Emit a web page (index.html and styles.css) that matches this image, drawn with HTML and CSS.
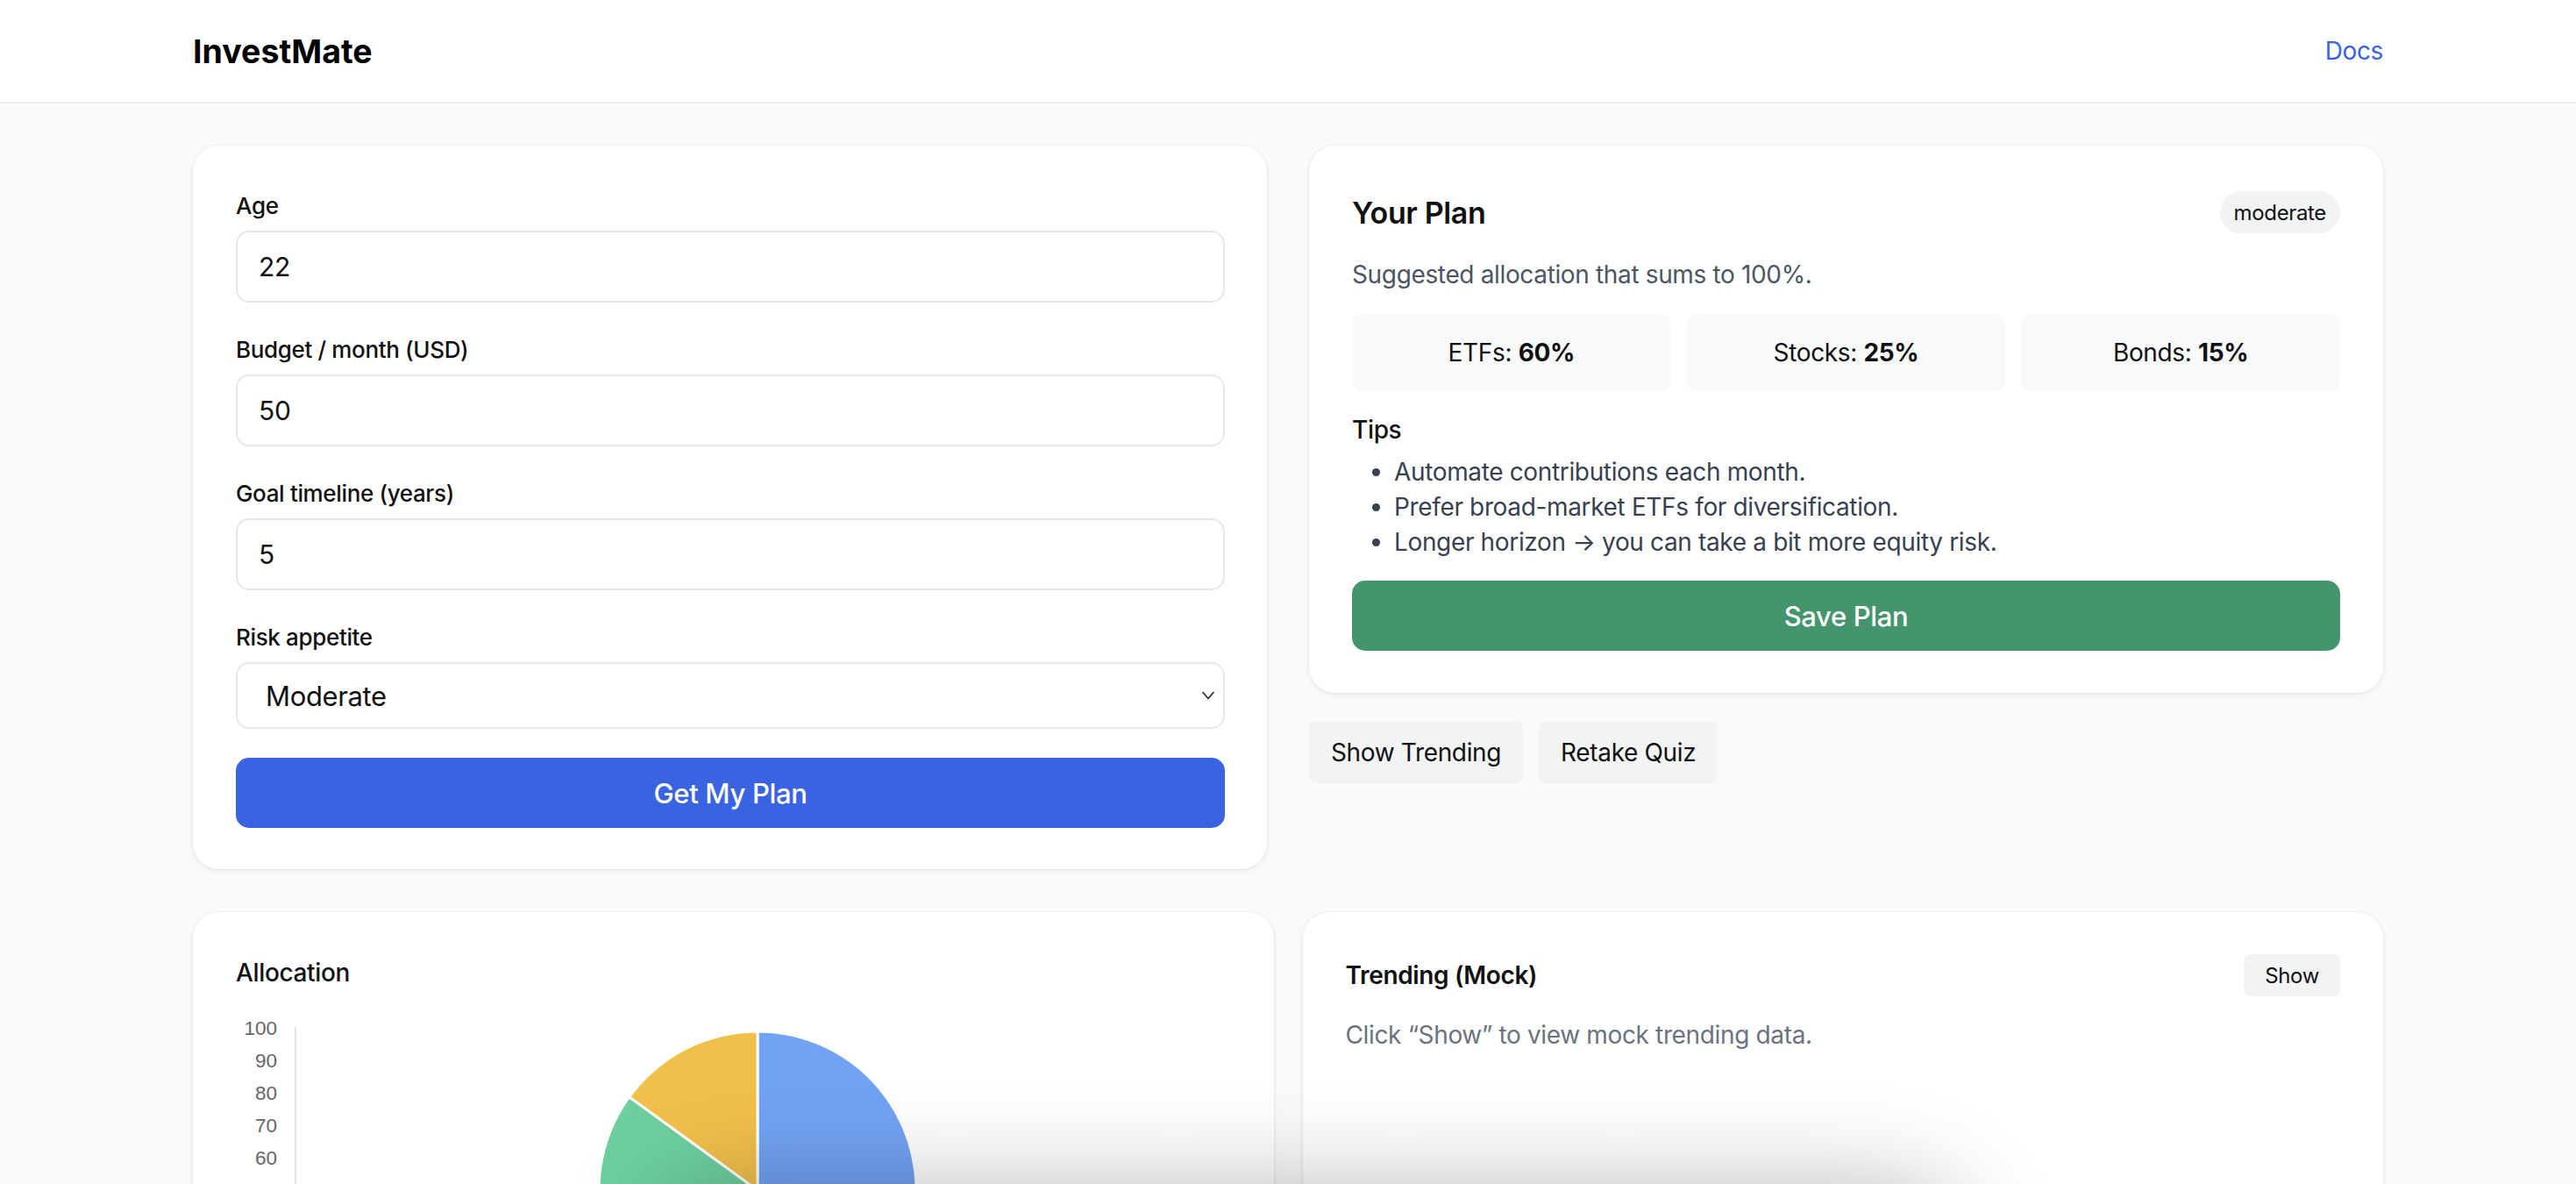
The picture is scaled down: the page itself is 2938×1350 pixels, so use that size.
FILE: index.html
```html
<!DOCTYPE html>
<html lang="en">
<head>
<meta charset="utf-8">
<title>InvestMate</title>
<link rel="stylesheet" href="styles.css">
</head>
<body>
<header class="topbar">
  <div class="container topbar-inner">
    <div class="logo">InvestMate</div>
    <a class="docs" href="#">Docs</a>
  </div>
</header>
<main class="container main">
  <section class="grid-top">
    <form class="card quiz">
      <div class="field">
        <label class="label">Age</label>
        <input class="input" type="text" value="22">
      </div>
      <div class="field">
        <label class="label">Budget / month (USD)</label>
        <input class="input" type="text" value="50">
      </div>
      <div class="field">
        <label class="label">Goal timeline (years)</label>
        <input class="input" type="text" value="5">
      </div>
      <div class="field field-last">
        <label class="label">Risk appetite</label>
        <div class="select-wrap">
          <select class="select"><option>Moderate</option></select>
          <svg class="chevron" viewBox="0 0 14 10" aria-hidden="true"><polyline points="1,1.5 7,8.5 13,1.5" fill="none" stroke="#222" stroke-width="1.6" stroke-linecap="round" stroke-linejoin="round"/></svg>
        </div>
      </div>
      <button class="btn-primary" type="button">Get My Plan</button>
    </form>
    <div class="plan-col">
      <div class="card plan">
        <div class="plan-head">
          <h2 class="plan-title">Your Plan</h2>
          <span class="badge">moderate</span>
        </div>
        <p class="muted">Suggested allocation that sums to 100%.</p>
        <div class="alloc">
          <div class="alloc-item">ETFs:&nbsp;<b>60%</b></div>
          <div class="alloc-item">Stocks:&nbsp;<b>25%</b></div>
          <div class="alloc-item">Bonds:&nbsp;<b>15%</b></div>
        </div>
        <h3 class="tips-title">Tips</h3>
        <ul class="tips">
          <li>Automate contributions each month.</li>
          <li>Prefer broad-market ETFs for diversification.</li>
          <li>Longer horizon → you can take a bit more equity risk.</li>
        </ul>
        <button class="btn-save" type="button">Save Plan</button>
      </div>
      <div class="actions">
        <button class="btn-ghost" type="button">Show Trending</button>
        <button class="btn-ghost" type="button">Retake Quiz</button>
      </div>
    </div>
  </section>
  <section class="grid-bottom">
    <div class="card chart-card">
      <h3 class="card-title">Allocation</h3>
      <svg class="chart" width="1134" height="420" viewBox="0 0 1134 420">
        <line x1="68" y1="21" x2="68" y2="420" stroke="#e3e3e3" stroke-width="2"/>
        <g class="ticks" text-anchor="end">
          <text x="47" y="30">100</text>
          <text x="47" y="67">90</text>
          <text x="47" y="104">80</text>
          <text x="47" y="141">70</text>
          <text x="47" y="178">60</text>
          <text x="47" y="215">50</text>
        </g>
        <g stroke="#fff" stroke-width="3" stroke-linejoin="round">
          <path d="M595,207 L595,26 A181,181 0 1,1 488.6,353.4 Z" fill="#72a3f3"/>
          <path d="M595,207 L488.6,353.4 A181,181 0 0,1 448.6,100.6 Z" fill="#6dcf9e"/>
          <path d="M595,207 L448.6,100.6 A181,181 0 0,1 595,26 Z" fill="#f1c04b"/>
        </g>
      </svg>
    </div>
    <div class="card trend-card">
      <div class="trend-head">
        <h3 class="trend-title">Trending (Mock)</h3>
        <button class="btn-sm" type="button">Show</button>
      </div>
      <p class="note">Click “Show” to view mock trending data.</p>
    </div>
  </section>
</main>
<div class="bottom-shadow"></div>
</body>
</html>
```
FILE: styles.css
```css
* { box-sizing: border-box; }
html, body { margin: 0; padding: 0; }
body {
  background: #f9fafb;
  font-family: Inter, "Noto Sans", "Liberation Sans", sans-serif;
  color: #111;
  letter-spacing: -0.022em;
  height: 1350px;
  overflow: hidden;
}
button, input, select { letter-spacing: inherit; }
.container { width: 2498px; margin: 0 auto; }

.topbar { background: #fff; border-bottom: 2px solid #eff0f2; }
.topbar-inner {
  height: 116px;
  display: flex;
  align-items: center;
  justify-content: space-between;
}
.logo { font-size: 37.5px; font-weight: 700; color: #000; letter-spacing: 0; }
.docs { color: #3963e2; font-size: 28px; text-decoration: none; }

.main { padding-top: 48px; }
.grid-top {
  display: grid;
  grid-template-columns: 1fr 1fr;
  gap: 48px;
  align-items: start;
}
.card {
  background: #fff;
  border-radius: 30px;
  box-shadow: 0 0 0 1px rgba(0,0,0,0.025), 0 2px 6px rgba(0,0,0,0.08);
}

.quiz { padding: 50px 48px 47px 49px; }
.field { margin-bottom: 35px; }
.field-last { margin-bottom: 0; }
.label {
  display: block;
  font-size: 26px;
  line-height: 38px;
  font-weight: 500;
  margin-bottom: 9px;
}
.input {
  display: block;
  width: 100%;
  height: 82px;
  border: 2px solid #e6e7eb;
  border-radius: 15px;
  padding: 0 24px;
  font-family: inherit;
  font-size: 30px;
  color: #111;
  background: #fff;
  outline: none;
}
.select-wrap { position: relative; }
.select {
  display: block;
  -webkit-appearance: none;
  appearance: none;
  width: 100%;
  height: 76px;
  border: 2px solid #e6e7eb;
  border-radius: 15px;
  padding: 0 32px;
  font-family: inherit;
  font-size: 31px;
  color: #111;
  background: #fff;
  outline: none;
}
.chevron {
  position: absolute;
  right: 12px;
  top: 50%;
  width: 14px;
  height: 10px;
  margin-top: -5px;
  pointer-events: none;
}
.btn-primary {
  display: block;
  width: 100%;
  height: 80px;
  margin-top: 33px;
  border: 0;
  border-radius: 15px;
  background: #3a63e2;
  color: #fff;
  font-family: inherit;
  font-size: 31px;
  font-weight: 500;
}

.plan { padding: 48px 49px; }
.plan-head {
  height: 56px;
  display: flex;
  align-items: center;
  justify-content: space-between;
}
.plan-title { margin: 0; font-size: 34px; font-weight: 600; }
.badge {
  height: 48px;
  padding: 0 16px;
  border-radius: 24px;
  background: #f2f3f5;
  font-size: 24px;
  display: flex;
  align-items: center;
}
.muted { margin: 22px 0 0; font-size: 28px; line-height: 42px; color: #4b5563; }
.alloc {
  margin-top: 24px;
  display: grid;
  grid-template-columns: repeat(3, 1fr);
  gap: 18px;
}
.alloc-item {
  height: 88px;
  background: #f8f9fb;
  border-radius: 12px;
  display: flex;
  align-items: center;
  justify-content: center;
  font-size: 28px;
}
.alloc-item b { font-weight: 700; }
.tips-title { margin: 23px 0 0; font-size: 28px; line-height: 42px; font-weight: 500; }
.tips {
  margin: 7px 0 0;
  padding-left: 48px;
  font-size: 28px;
  line-height: 40px;
  color: #374151;
}
.btn-save {
  display: block;
  width: 100%;
  height: 80px;
  margin-top: 24px;
  border: 0;
  border-radius: 15px;
  background: #44946d;
  color: #fff;
  font-family: inherit;
  font-size: 31px;
  font-weight: 500;
}
.actions { margin-top: 32px; display: flex; gap: 18px; }
.btn-ghost {
  height: 71px;
  padding: 0 25px;
  border: 0;
  border-radius: 8px;
  background: #f2f3f5;
  color: #111;
  font-family: inherit;
  font-size: 28px;
}

.grid-bottom {
  margin-top: 49px;
  display: grid;
  grid-template-columns: 1fr 1fr;
  gap: 33px;
}
.chart-card { padding: 48px 49px; height: 700px; }
.card-title { margin: 0; font-size: 28px; line-height: 42px; font-weight: 500; }
.chart { display: block; margin-top: 20px; }
.ticks { font-family: "Liberation Sans", Arial, sans-serif; font-size: 22.5px; fill: #666; letter-spacing: 0; }
.trend-card { padding: 48px 49px; height: 700px; }
.trend-head {
  height: 48px;
  display: flex;
  align-items: center;
  justify-content: space-between;
}
.trend-title { margin: 0; font-size: 28px; font-weight: 600; }
.btn-sm {
  height: 48px;
  padding: 0 24px;
  border: 0;
  border-radius: 8px;
  background: #f2f3f5;
  color: #111;
  font-family: inherit;
  font-size: 24px;
}
.note { margin: 23px 0 0; font-size: 28px; line-height: 42px; color: #6b7280; }

.bottom-shadow {
  position: fixed;
  left: 790px;
  top: 1390px;
  width: 1410px;
  height: 200px;
  border-radius: 30px;
  background: #fff;
  box-shadow: 0 0 120px 30px rgba(0,0,0,0.3);
}
```
